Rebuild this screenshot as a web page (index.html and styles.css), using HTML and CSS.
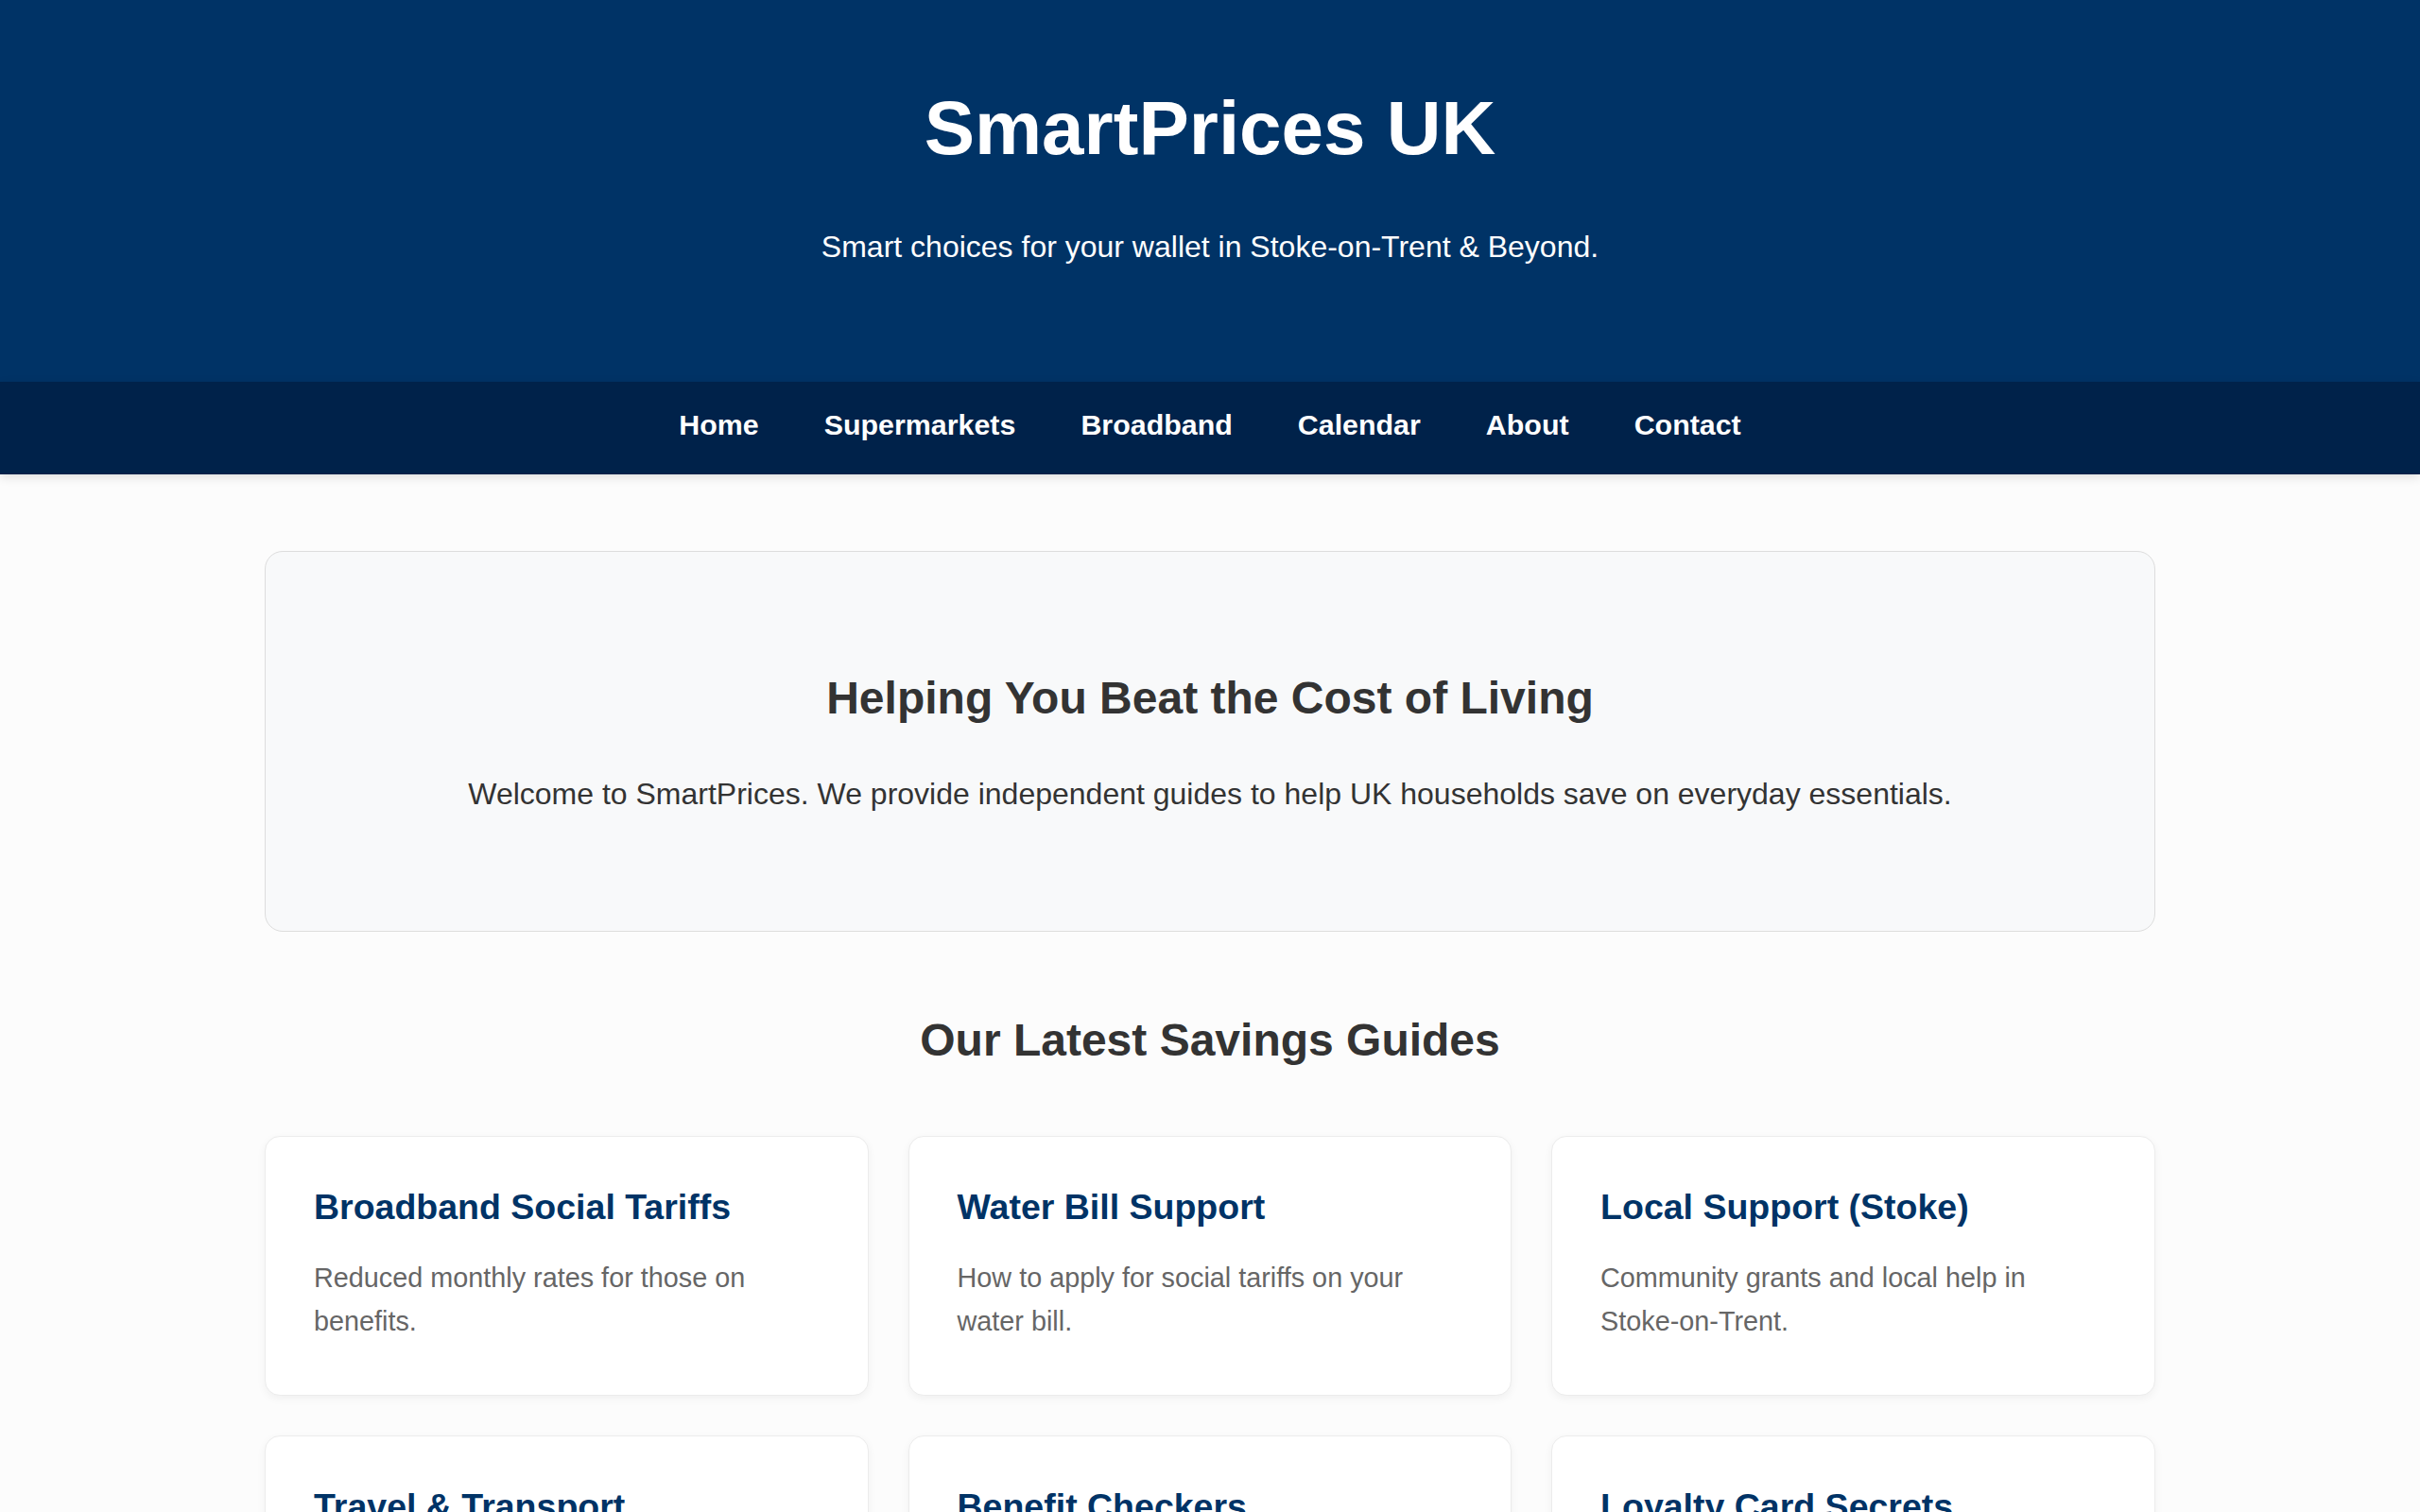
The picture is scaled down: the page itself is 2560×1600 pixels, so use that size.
FILE: index.html
```html
<!DOCTYPE html>
<html lang="en">
<head>
<meta charset="utf-8">
<title>SmartPrices UK</title>
<link rel="stylesheet" href="styles.css">
</head>
<body>
<header class="site-header">
  <h1 class="site-title">SmartPrices UK</h1>
  <p class="site-tagline">Smart choices for your wallet in Stoke-on-Trent &amp; Beyond.</p>
</header>
<nav class="site-nav">
  <a href="#">Home</a>
  <a href="#">Supermarkets</a>
  <a href="#">Broadband</a>
  <a href="#">Calendar</a>
  <a href="#">About</a>
  <a href="#">Contact</a>
</nav>
<main class="container">
  <section class="hero">
    <h2 class="hero-title">Helping You Beat the Cost of Living</h2>
    <p class="hero-text">Welcome to SmartPrices. We provide independent guides to help UK households save on everyday essentials.</p>
  </section>
  <h2 class="section-title">Our Latest Savings Guides</h2>
  <div class="grid">
    <article class="card">
      <h3 class="card-title">Broadband Social Tariffs</h3>
      <p class="card-text">Reduced monthly rates for those on benefits.</p>
    </article>
    <article class="card">
      <h3 class="card-title">Water Bill Support</h3>
      <p class="card-text">How to apply for social tariffs on your water bill.</p>
    </article>
    <article class="card">
      <h3 class="card-title">Local Support (Stoke)</h3>
      <p class="card-text">Community grants and local help in Stoke-on-Trent.</p>
    </article>
    <article class="card">
      <h3 class="card-title">Travel &amp; Transport</h3>
      <p class="card-text">Bus passes, railcards and cheaper ways to get around.</p>
    </article>
    <article class="card">
      <h3 class="card-title">Benefit Checkers</h3>
      <p class="card-text">Find out what support you may be entitled to.</p>
    </article>
    <article class="card">
      <h3 class="card-title">Loyalty Card Secrets</h3>
      <p class="card-text">Get the most from supermarket reward schemes.</p>
    </article>
  </div>
</main>
</body>
</html>
```

FILE: styles.css
```css
* {
  box-sizing: border-box;
}

html, body {
  margin: 0;
  padding: 0;
}

body {
  background: #fcfcfc;
  font-family: "Liberation Sans", Arial, Helvetica, sans-serif;
  color: #333333;
}

.site-header {
  background: #003366;
  color: #ffffff;
  text-align: center;
  padding: 90px 20px 124px;
}

.site-title {
  margin: 0 0 61px;
  font-size: 80px;
  line-height: 92px;
  font-weight: 700;
}

.site-tagline {
  margin: 0;
  font-size: 32px;
  line-height: 37px;
}

.site-nav {
  background: #00224a;
  display: flex;
  justify-content: center;
  padding: 25px 0 33px;
  box-shadow: 0 3px 10px rgba(0, 0, 0, 0.12);
  position: relative;
}

.site-nav a {
  color: #ffffff;
  text-decoration: none;
  font-weight: 700;
  font-size: 30.4px;
  line-height: 40px;
  margin: 0 34.5px;
}

.container {
  max-width: 2000px;
  margin: 0 auto;
  padding-top: 81px;
}

.hero {
  background: #f8f9fa;
  border: 1.5px solid #dddddd;
  border-radius: 19px;
  text-align: center;
  padding: 127px 60px 126px;
}

.hero-title {
  margin: 0 0 56px;
  font-size: 48px;
  line-height: 55px;
  font-weight: 700;
  color: #333333;
}

.hero-text {
  margin: 0;
  font-size: 32px;
  line-height: 37px;
  color: #333333;
}

.section-title {
  text-align: center;
  margin: 87px 0 74px;
  font-size: 48px;
  line-height: 55px;
  font-weight: 700;
  color: #333333;
}

.grid {
  display: grid;
  grid-template-columns: repeat(3, 1fr);
  gap: 41.6px;
}

.card {
  background: #ffffff;
  border: 1.5px solid #ececec;
  border-radius: 16px;
  box-shadow: 0 3px 10px rgba(0, 0, 0, 0.05);
  padding: 53px 51px 55px;
}

.card-title {
  margin: 0 0 31px;
  font-size: 37.5px;
  line-height: 42px;
  font-weight: 700;
  color: #003366;
}

.card-text {
  margin: 0;
  font-size: 28.8px;
  line-height: 46px;
  color: #666666;
}
```
